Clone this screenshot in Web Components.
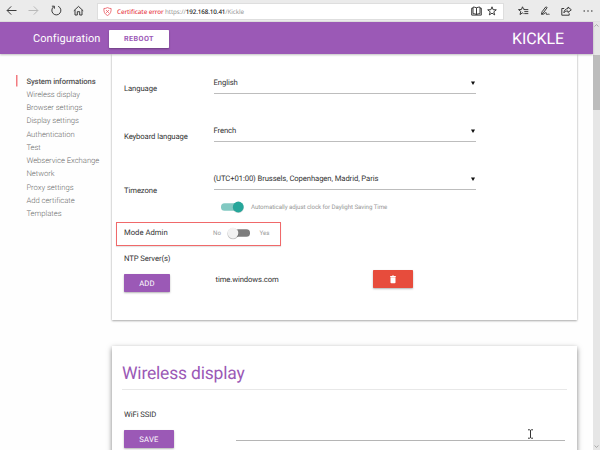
<!DOCTYPE html>
<html lang="en">
<head>
<meta charset="utf-8">
<title>Kickle</title>
<style>
html,body{margin:0;height:100%;overflow:hidden;background:#fefefe}
body{font-family:Roboto,"Liberation Sans",sans-serif;font-size:7.7px;color:#333;text-rendering:geometricPrecision;letter-spacing:-.1px}
</style>
</head>
<body>
<kickle-app></kickle-app>
<script>
const define = (name, html) => customElements.define(name, class extends HTMLElement {
  connectedCallback() {
    if (this.shadowRoot) return;
    const t = document.createElement('template');
    t.innerHTML = html;
    this.attachShadow({mode: 'open'}).append(t.content.cloneNode(true));
  }
});

define('browser-bar', `
<style>
:host{display:flex;height:22px;box-sizing:border-box;background:#ebebeb;align-items:center;font-family:"Noto Sans",sans-serif;font-size:6.3px;border-bottom:1px solid #e0e0e0}
svg{display:block;fill:none;stroke:#333;stroke-width:.95;flex:none}
.nav{display:flex;width:97px;align-items:center;padding-left:6px;gap:11.4px;box-sizing:border-box}
.addr{display:flex;align-items:center;width:407px;height:17px;margin-top:1px;background:#fff;box-sizing:border-box;border:1px solid #dedede;padding:0 6px 0 5px;white-space:pre}
.err{color:#e8404b;margin-left:5px;width:45px;font-weight:500;letter-spacing:-.08px}
.url{color:#999;margin-left:3px;flex:1;letter-spacing:-.12px}
.url b{font-weight:500;color:#222}
.tools{display:flex;align-items:center;padding-left:14px;gap:11px}
</style>
<div class="nav">
<svg width="11" height="11" viewBox="0 0 11 11"><path d="M10.5 5.5H1.2M5.2 1.4 1.1 5.5l4.1 4.1"/></svg>
<svg width="11" height="11" viewBox="0 0 11 11" style="stroke:#b5b5b5"><path d="M.5 5.5h9.3M5.8 1.4l4.1 4.1-4.1 4.1"/></svg>
<svg width="11" height="11" viewBox="0 0 11 11"><path d="M7.2 1.3a4.5 4.5 0 1 1-4.4.4M.9 1.2h2.5v2.5"/></svg>
<svg width="11" height="11" viewBox="0 0 11 11"><path d="M.8 5.8 5.5 1.4l4.7 4.4M2 5v5h2.3V6.7h2.4V10H9V5"/></svg>
</div>
<div class="addr">
<svg width="9" height="9" viewBox="0 0 9 9" style="stroke:#e8505b;stroke-width:.8"><path d="M4.5.6C3.5 1.3 2 1.5.9 1.5c-.2 3 .5 5.500 3.600 7 3.100-1.500 3.800-4 3.600-7C7 1.500 5.500 1.300 4.500.6zM3.100 3.100l2.800 2.800M5.900 3.100 3.100 5.900"/></svg>
<span class="err">Certificate error</span><span class="url">https://<b>192.168.10.41</b>/Kickle</span>
<svg width="11" height="10" viewBox="0 0 11 10" style="margin-right:5.500px"><path d="M5.500 1.800C4.500 1.200 3.200 1.100 2 1.100v6.600c1.200 0 2.500.1 3.500.8 1-.7 2.300-.8 3.500-.8V1.100c-1.200 0-2.500.1-3.500.7zM5.500 1.800v7M2 2.200H.7v6.900h9.600V2.200H9"/></svg>
<svg width="10" height="10" viewBox="0 0 10 10"><path d="M5 .8l1.100 2.900 3.200.1-2.500 2 .9 3.100L5 7.200 2.300 8.900l.9-3.100-2.500-2 3.200-.1z"/></svg>
</div>
<div class="tools">
<svg width="11" height="10" viewBox="0 0 11 10"><path d="M7 3.400 5.600 3.300 4.500.8 3.400 3.500l-2.900.1 2.300 1.900L2 8.500l2.500-1.600 1 .7M6.300 3.600h4M6.300 5.600h4M6.300 7.600h4"/></svg>
<svg width="10" height="10" viewBox="0 0 10 10"><path d="M1.500 8.200 2 5.800 5.700 1c.5-.5 1.600.2 1.200.9L3.300 7zM1.500 8.200h1.700c1.300 0 2.200-2 3-1.500.7.4-.4 1.700.5 1.800.8.1 1.100-.6 2.800-.2"/></svg>
<svg width="11" height="10" viewBox="0 0 11 10"><path d="M3.200 2.500H.8v6.700h7.400V7.300M7 1l3.300 2.800L7 6.500V5C5.200 4.900 3.900 5.500 2.900 6.800 3.100 4.400 4.600 2.800 7 2.500z"/></svg>
<svg width="10" height="10" viewBox="0 0 10 10" style="fill:#333;stroke:none"><circle cx="1.200" cy="5" r=".75"/><circle cx="5" cy="5" r=".75"/><circle cx="8.800" cy="5" r=".75"/></svg>
</div>`);

define('md-button', `
<style>
:host{display:flex;align-items:center;justify-content:center;box-sizing:border-box;height:18px;border-radius:.7px;background:#9b59b6;color:#fff;font-size:7.700px;letter-spacing:.2px;box-shadow:0 1px 2px rgba(0,0,0,.3)}
</style><slot></slot>`);

define('app-header', `
<style>
:host{display:flex;align-items:center;height:32px;box-sizing:border-box;padding:0 29px 0 33px;background:#9b59b6;color:#fff;box-shadow:0 1px 2px rgba(0,0,0,.25);position:relative;z-index:2}
.t{font-size:11px;width:76px;white-space:nowrap;letter-spacing:.08px}
md-button{width:60px;background:#fff;color:#9b59b6;font-weight:700;font-size:7.200px;margin-top:1px;letter-spacing:.4px}
.k{margin-left:auto;font-size:16px;letter-spacing:-.1px}
</style>
<span class="t">Configuration</span><md-button>REBOOT</md-button><span class="k">KICKLE</span>`);

define('side-nav', `
<style>
:host{display:block;width:112px;box-sizing:border-box;padding:20.300px 0 0 16px;flex:none;color:#6c6c6c;letter-spacing:-.04px;font-weight:300}
::slotted(*){display:block;height:13.260px;line-height:13.260px;padding-left:10.400px;white-space:nowrap;font-size:7.700px}
::slotted(.on){font-weight:500;color:#555;letter-spacing:-.13px;background:linear-gradient(#f27b80,#f27b80) 0 .7px/1.500px 11.500px no-repeat}
</style><slot></slot>`);

define('content-card', `
<style>
:host{display:block;box-sizing:border-box;background:#fff;padding:0 12px;box-shadow:0 1px 2px rgba(0,0,0,.3),0 0 2px rgba(0,0,0,.12)}
:host([raised]){box-shadow:0 2px 5px rgba(0,0,0,.5)}
</style><slot></slot>`);

define('select-row', `
<style>
:host{display:flex;height:48px;box-sizing:border-box}
.l{width:89.500px;padding-top:var(--drop,11px);line-height:10px}
.v{display:flex;justify-content:space-between;box-sizing:border-box;width:262px;height:21px;border-bottom:1px solid #bdbdbd;line-height:10px;padding:5px 0 0}
svg{margin:2.500px 1px 0 0}
</style>
<div class="l"><slot name="label"></slot></div><div class="v"><span><slot></slot></span><svg width="4" height="4" viewBox="0 0 4 4"><path d="M0 .4h4L2.200 3.700h-.4z" fill="#111"/></svg></div>`);

define('toggle-switch', `
<style>
:host{display:block;width:22px;height:12px;flex:none}
svg{display:block;overflow:visible}
:host([on]) .off,:host(:not([on])) .onn{display:none}
</style>
<svg width="22" height="12" viewBox="0 0 22 12">
<g class="onn"><rect x="0" y="2.200" width="20" height="7.600" rx="3.600" fill="#82c9c2"/><circle cx="17.300" cy="6.500" r="5.500" fill="#000" opacity=".15"/><circle cx="17.300" cy="6" r="5.400" fill="#26a69a"/></g>
<g class="off"><rect x="2" y="2.200" width="20" height="7.600" rx="3.600" fill="#7d7d7d"/><circle cx="5" cy="6.700" r="5.600" fill="#000" opacity=".25"/><circle cx="5" cy="6" r="5.400" fill="#f2f2f2"/></g>
</svg>`);

define('scroll-bar', `
<style>
:host{display:flex;flex-direction:column;align-items:center;width:7px;background:#e6e6e6;flex:none}
.thumb{width:7px;height:55px;background:#bcbcbc;margin:26px 0 auto}
svg{display:block;fill:none;stroke:#999;stroke-width:.8;margin:2px 0}
</style>
<svg width="5" height="3" viewBox="0 0 5 3"><path d="M.5 2.500 2.500.6l2 1.900"/></svg><div class="thumb"></div><svg width="5" height="3" viewBox="0 0 5 3"><path d="M.5.500l2 1.900 2-1.900"/></svg>`);

define('kickle-app', `
<style>
:host{display:flex;flex-direction:column;width:600px;height:450px;overflow:hidden;position:relative}
.main{display:flex;flex:1;min-height:0;padding-top:.4px}
.page{width:593px;display:flex;flex-direction:column;min-height:0}
.body{display:flex;flex:1;min-height:0;overflow:hidden}
.cards{width:465px;display:flex;flex-direction:column;gap:26px;padding-top:0}
content-card{flex:none}
.one{height:266px}.two{height:140px}
.sel{padding-top:19px}
.dst{display:flex;align-items:center;height:12px;margin:-16px 0 0 97px;gap:8px;font-size:6.200px;color:#999;letter-spacing:-.09px}
.admin{display:flex;align-items:center;box-sizing:border-box;width:165px;height:24px;margin:9px 0 0 -8px;border:1.500px solid #f0696a;padding-left:7px;box-shadow:0 1px 1px rgba(0,0,0,.1);font-size:6.200px;color:#999;letter-spacing:0}
.admin b{font-weight:400;font-size:7.700px;color:#333;width:89px;margin-top:-3px}
.admin span{margin-top:-2px}
.admin toggle-switch{margin:-2px 9.500px 0 7px}
.ntp{margin-top:8px;line-height:10px}
.ntprow{display:flex;align-items:flex-start;margin-top:6px}
.ntprow .a{width:46px;margin-top:4px}
.ntprow span{width:157px;margin-left:46px;padding-top:4.500px;line-height:10px;text-indent:-.5px}
.ntprow .d{width:40px;background:#e74c3c}
h2{margin:0 -2px;height:44px;box-sizing:border-box;padding-top:16px;border-bottom:1px solid #e8e8e8;font-weight:400;font-size:17.500px;line-height:24px;color:#9b59b6;letter-spacing:-.2px}
.ssid{margin-top:20px;line-height:10px}
.save{display:flex;margin-top:10px;align-items:flex-start}
.save md-button{width:50px}
.field{width:329px;height:11px;margin-left:62px;border-bottom:1px solid #b5b5b5;box-sizing:border-box}
.cursor{position:absolute;left:527px;top:429px}
</style>
<browser-bar></browser-bar>
<div class="main">
<div class="page">
<app-header></app-header>
<div class="body">
<side-nav><span class="on">System informations</span><span>Wireless display</span><span>Browser settings</span><span>Display settings</span><span>Authentication</span><span>Test</span><span>Webservice Exchange</span><span>Network</span><span>Proxy settings</span><span>Add certificate</span><span>Templates</span></side-nav>
<div class="cards">
<content-card class="one">
<div class="sel">
<select-row><span slot="label">Language</span>English</select-row>
<select-row><span slot="label">Keyboard language</span>French</select-row>
<select-row style="--drop:16.500px"><span slot="label">Timezone</span>(UTC+01:00) Brussels, Copenhagen, Madrid, Paris</select-row>
</div>
<div class="dst"><toggle-switch on></toggle-switch><span>Automatically adjust clock for Daylight Saving Time</span></div>
<div class="admin"><b>Mode Admin</b><span>No</span><toggle-switch></toggle-switch><span>Yes</span></div>
<div class="ntp">NTP Server(s)</div>
<div class="ntprow"><md-button class="a">ADD</md-button><span>time.windows.com</span><md-button class="d"><svg width="8" height="9" viewBox="0 0 8 9" fill="#fff"><path d="M1.200 1h1.700l.4-.5h1.400l.4.500h1.700v.9H1.200zM1.500 2.300h5v5.200q0 .8-.8.800H2.300q-.8 0-.8-.8z"/></svg></md-button></div>
</content-card>
<content-card class="two" raised>
<h2>Wireless display</h2>
<div class="ssid">WiFi SSID</div>
<div class="save"><md-button>SAVE</md-button><div class="field"></div></div>
</content-card>
</div>
</div>
</div>
<scroll-bar></scroll-bar>
</div>
<svg class="cursor" width="7" height="10" viewBox="0 0 7 10" fill="none" stroke="#333"><path d="M1 .8h1.700l.8.600.8-.6H6M1 9.200h1.700l.8-.6.8.600H6M3.500 1.200v7.600"/></svg>`);
</script>
</body>
</html>
